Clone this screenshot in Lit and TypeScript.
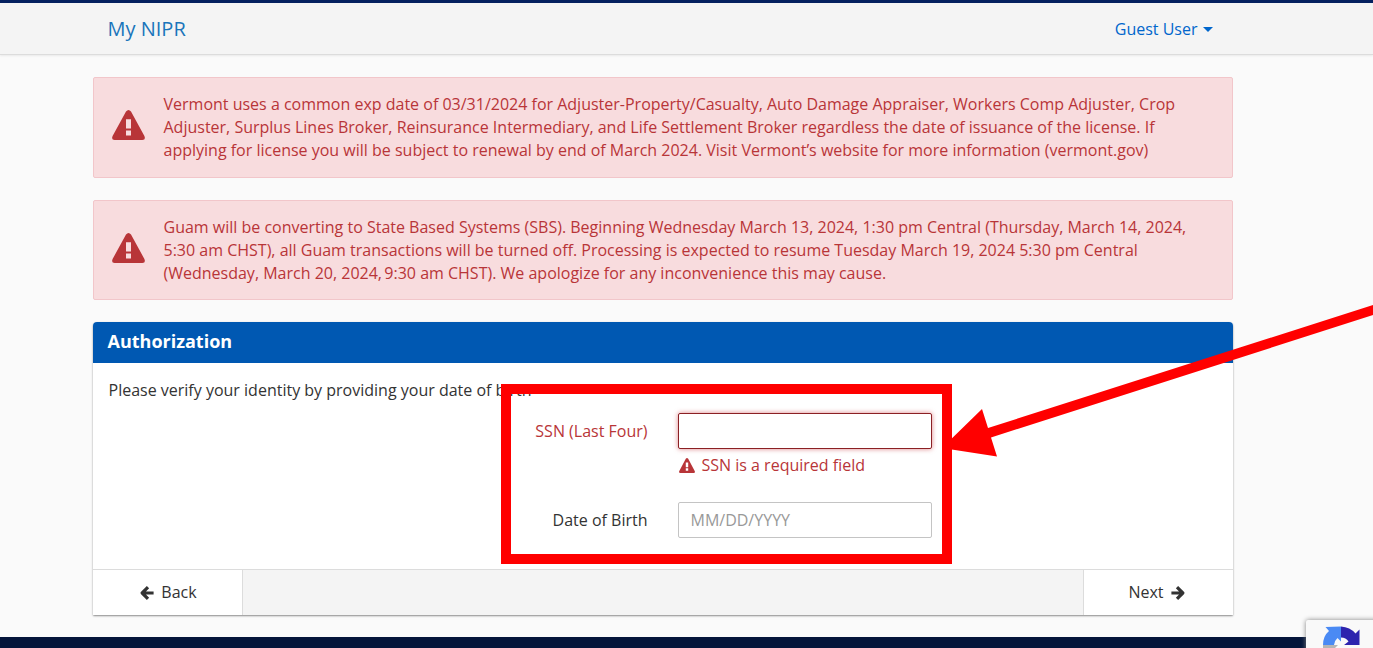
import { LitElement, html, css } from "lit";
import { customElement } from "lit/decorators.js";

const alerts = [
  [
    "Vermont uses a common exp date of 03/31/2024 for Adjuster-Property/Casualty, Auto Damage Appraiser, Workers Comp Adjuster, Crop",
    "Adjuster, Surplus Lines Broker, Reinsurance Intermediary, and Life Settlement Broker regardless the date of issuance of the license. If",
    "applying for license you will be subject to renewal by end of March 2024. Visit Vermont’s website for more information (vermont.gov)",
  ],
  [
    "Guam will be converting to State Based Systems (SBS). Beginning Wednesday March 13, 2024, 1:30 pm Central (Thursday, March 14, 2024,",
    "5:30 am CHST), all Guam transactions will be turned off. Processing is expected to resume Tuesday March 19, 2024 5:30 pm Central",
    html`(Wednesday, March 20, 2024,<span class="tight"> </span>9:30 am CHST). We apologize for any inconvenience this may cause.`,
  ],
];

const warning = (w: number, h: number) => html`<svg width=${w} height=${h} viewBox="0 0 33 30" preserveAspectRatio="none">
  <path fill="#b83538" fill-rule="evenodd" d="M14 1.6Q16.5-1.4 19 1.6L32.4 26Q34 30 30.4 30H2.6Q-1 30 .6 26ZM14 9.2V18.6H19V9.2ZM14 20.6V25.6H19V20.6Z"/>
</svg>`;

const arrow = (cls: string) => html`<svg class=${cls} width="14" height="14" viewBox="0 0 14 14">
  <path fill="none" stroke="#333" stroke-width="3.2" stroke-linejoin="round" d="M13.6 7H2.6M8 1.2 2.2 7 8 12.8"/>
</svg>`;

@customElement("app-root")
export class AppRoot extends LitElement {
  static styles = css`
    :host { display: block; position: relative; height: 648px; overflow: hidden; background: #fafafa;
      font: 16px/23px "Open Sans", "Noto Sans", sans-serif; color: #333; }
    * { box-sizing: border-box; }
    svg { display: block; }
    .page { display: flex; flex-direction: column; height: 648px; }
    .nav { height: 55px; flex: none; border-top: 3px solid #04205f; border-bottom: 1px solid #dcdcdc; background: #f4f4f4;
      box-shadow: 0 1px 2px rgba(0,0,0,.07); display: flex; justify-content: space-between; align-items: center;
      padding: 0 160px 0 107.5px; }
    .brand { font-size: 20px; color: #1a75bb; white-space: nowrap; }
    .user { color: #0066cc; display: flex; align-items: center; gap: 5.5px; padding-top: 1px; }
    .caret { border: 5px solid transparent; border-top-color: #0066cc; border-bottom: 0; }
    .main { width: 1140px; margin: 22px 0 0 93px; display: flex; flex-direction: column; gap: 22px; }
    .alert { height: 101px; background: #f8dcde; border: 1px solid #f2c6ca; border-radius: 2px; color: #b83538;
      display: flex; padding: 15px 0 0 18px; gap: 18.5px; }
    .alert + .alert { height: 100px; }
    .alert svg { margin-top: 17px; flex: none; }
    .line { white-space: nowrap; }
    .tight { word-spacing: -1.8px; }
    .card { height: 293px; background: #fff; border-radius: 4px 4px 1px 1px; box-shadow: 0 1px 2px rgba(0,0,0,.45);
      display: flex; flex-direction: column; }
    .head { height: 41px; background: #0058b2; color: #fff; font-weight: 700; font-size: 18px; line-height: 39px;
      padding-left: 14.5px; border-radius: 4px 4px 0 0; }
    .body { flex: 1; padding: 16px 0 0 15.5px; }
    .form { display: grid; grid-template-columns: 539px 254px; column-gap: 30.5px; margin-top: 11px; }
    .label { text-align: right; line-height: 36px; }
    .bad { color: #b83538; }
    .input { height: 36px; width: 254px; border: 1px solid #c4c4c4; border-radius: 2px; background: #fff; font: inherit;
      padding: 0 11.5px; outline: none; }
    .input::placeholder { color: #999; opacity: 1; }
    .input.err { border-color: #8b2024; box-shadow: 0 0 5px rgba(200,50,55,.6); }
    .msg { grid-column: 2; display: flex; align-items: center; gap: 6.5px; height: 23px; margin: 5px 0 25px 1px; white-space: nowrap; }
    .foot { height: 46px; border-top: 1px solid #dcdcdc; background: #f4f4f4; display: flex; justify-content: space-between; }
    .btn { width: 150px; background: #fff; display: flex; justify-content: center; align-items: center; gap: 7px;
      border-right: 1px solid #dcdcdc; padding-left: 2px; }
    .btn.next { border-right: 0; border-left: 1px solid #dcdcdc; padding: 0 4px 0 0; }
    .flip { transform: scaleX(-1); }
    .bar { flex: none; height: 11px; margin-top: auto; background: #04153a; }
    .captcha { position: absolute; left: 1306px; top: 620px; width: 80px; height: 60px; background: #f9f9f9;
      border-radius: 2px; box-shadow: 0 0 5px #808080; }
    .mark { position: absolute; inset: 0; pointer-events: none; }
  `;

  render() {
    return html`
      <div class="page">
        <header class="nav">
          <div class="brand">My NIPR</div>
          <div class="user">Guest User<span class="caret"></span></div>
        </header>
        <main class="main">
          ${alerts.map((a) => html`<section class="alert">${warning(33, 30)}
            <div>${a.map((t) => html`<div class="line">${t}</div>`)}</div></section>`)}
          <section class="card">
            <div class="head">Authorization</div>
            <div class="body">
              <div>Please verify your identity by providing your date of birth</div>
              <div class="form">
                <label class="label bad">SSN (Last Four)</label><input class="input err" />
                <div class="msg bad">${warning(16, 15)}<span>SSN is a required field</span></div>
                <label class="label">Date of Birth</label><input class="input" placeholder="MM/DD/YYYY" />
              </div>
            </div>
            <div class="foot">
              <div class="btn">${arrow("")}<span>Back</span></div>
              <div class="btn next"><span>Next</span>${arrow("flip")}</div>
            </div>
          </section>
        </main>
        <footer class="bar"></footer>
      </div>
      <div class="captcha"><svg width="67" height="28" viewBox="1306 620 67 28">
        <path fill="#4a8af4" d="M1341 626.5V641.5L1337.5 638Q1334.5 640.5 1334 645H1323Q1323 636 1329 631L1325.5 627Q1333 626.5 1341 626.5Z"/>
        <path fill="#2d23ae" d="M1341 626.5Q1350 627 1355.5 633.5L1359.5 629.5V645H1344L1348.5 641.5Q1346 637.5 1341 637.5Z"/>
        <path fill="#b5b5b5" d="M1323 645H1338L1332 651H1323Z"/>
      </svg></div>
      <svg class="mark" width="1373" height="648" viewBox="0 0 1373 648">
        <rect x="506" y="389" width="441" height="170" fill="none" stroke="#f00" stroke-width="10"/>
        <path fill="#f00" d="M942 448 982 409 988 428 1373 305V315L991 437.5 997 456.5Z"/>
      </svg>`;
  }
}
